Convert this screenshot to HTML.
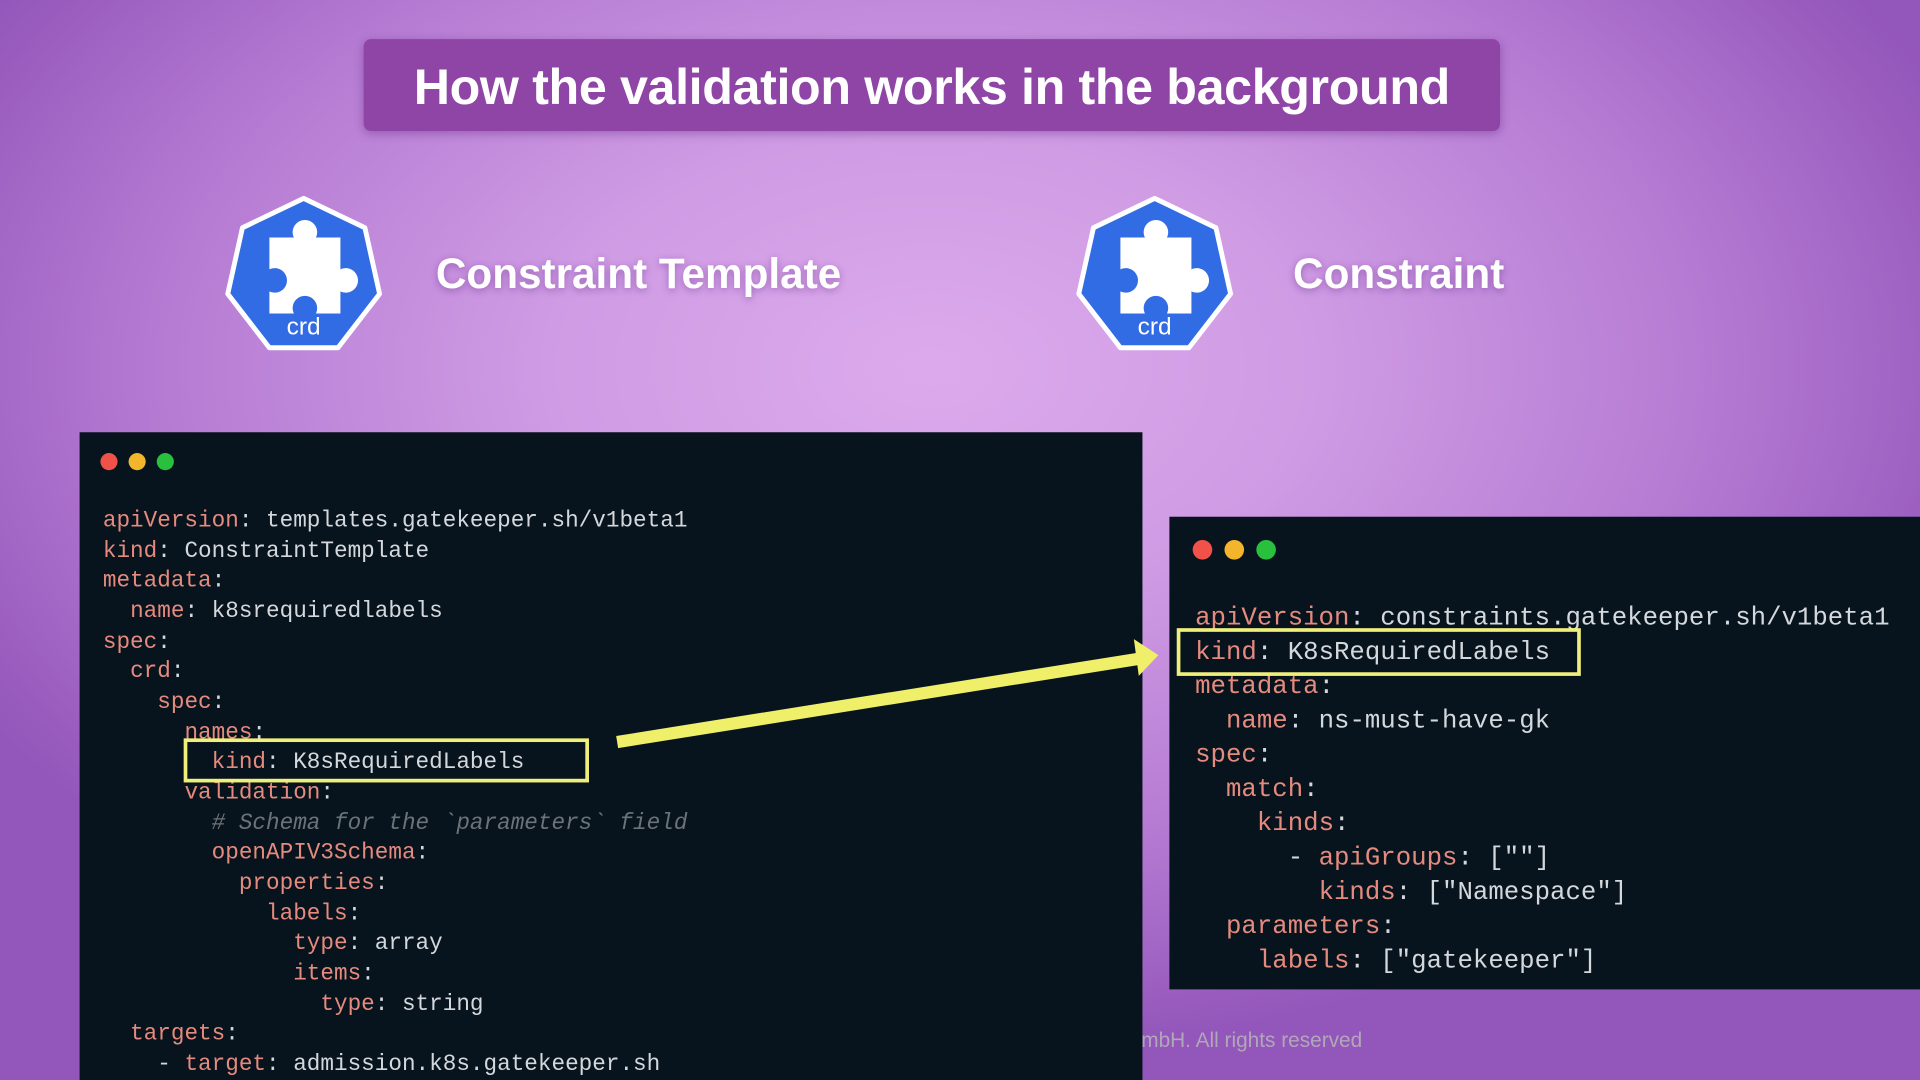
<!DOCTYPE html>
<html><head><meta charset="utf-8"><style>
html,body{margin:0;padding:0;width:1920px;height:1080px;overflow:hidden;background:#9d63c2}
#s{position:absolute;left:0;top:0;width:1568px;height:882px;transform:scale(1.22449);transform-origin:0 0;overflow:hidden;
background:radial-gradient(ellipse 900px 560px at 760px 300px,#dcaaec 0%,#cf9be4 35%,#b57bd3 70%,#9356ba 100%);}
.title{position:absolute;left:297px;top:32px;width:928px;height:75px;background:#8e45a6;border-radius:6px;box-shadow:0 2px 8px rgba(90,30,120,.4);
color:#fff;font:bold 41px "Liberation Sans",sans-serif;text-align:center;line-height:78px;letter-spacing:-0.3px}
.lbl{position:absolute;color:#fff;font:bold 34.5px "Liberation Sans",sans-serif;text-shadow:0 2px 6px rgba(80,20,120,.4)}
.panel{position:absolute;background:#07141d}
.dot{position:absolute;border-radius:50%}
pre{position:absolute;margin:0;font-family:"Liberation Mono",monospace;color:#d4d8dc}
.k{color:#e58a7e}.c{color:#6c7378;font-style:italic}
.box{position:absolute;border:3px solid #f0ef7c;box-sizing:border-box}
.foot{position:absolute;left:932px;top:840px;color:#b0a8b8;font:17px "Liberation Sans",sans-serif}
</style></head><body><div id="s">
<div class="title">How the validation works in the background</div>

<svg style="position:absolute;left:180px;top:158px" width="136" height="136" viewBox="0 0 136 136">
<polygon points="68,4 118,28 130,82 96,126 40,126 6,82 18,28" fill="#326ce5" stroke="#fff" stroke-width="4" stroke-linejoin="round"/>
<path d="M40,36 H60 a10,10 0 1 1 18,0 H98 V62 a10,10 0 1 1 0,18 V98 H78 a10,10 0 1 0 -18,0 H40 V80 a10,10 0 1 0 0,-18 Z" fill="#fff"/>
<text x="68" y="115" fill="#fff" font-family="Liberation Sans,sans-serif" font-size="20" text-anchor="middle">crd</text>
</svg>
<div class="lbl" style="left:356px;top:205px">Constraint Template</div>
<svg style="position:absolute;left:875px;top:158px" width="136" height="136" viewBox="0 0 136 136">
<polygon points="68,4 118,28 130,82 96,126 40,126 6,82 18,28" fill="#326ce5" stroke="#fff" stroke-width="4" stroke-linejoin="round"/>
<path d="M40,36 H60 a10,10 0 1 1 18,0 H98 V62 a10,10 0 1 1 0,18 V98 H78 a10,10 0 1 0 -18,0 H40 V80 a10,10 0 1 0 0,-18 Z" fill="#fff"/>
<text x="68" y="115" fill="#fff" font-family="Liberation Sans,sans-serif" font-size="20" text-anchor="middle">crd</text>
</svg>
<div class="lbl" style="left:1056px;top:205px">Constraint</div>

<div class="panel" style="left:65px;top:353px;width:868px;height:540px"></div>
<div class="dot" style="left:82px;top:370px;width:14px;height:14px;background:#f0524a"></div>
<div class="dot" style="left:105px;top:370px;width:14px;height:14px;background:#f3b52c"></div>
<div class="dot" style="left:128px;top:370px;width:14px;height:14px;background:#29c03e"></div>
<pre style="left:84px;top:414px;font-size:18.5px;line-height:24.65px"><span class="k">apiVersion</span>: templates.gatekeeper.sh/v1beta1
<span class="k">kind</span>: ConstraintTemplate
<span class="k">metadata</span>:
  <span class="k">name</span>: k8srequiredlabels
<span class="k">spec</span>:
  <span class="k">crd</span>:
    <span class="k">spec</span>:
      <span class="k">names</span>:
        <span class="k">kind</span>: K8sRequiredLabels
      <span class="k">validation</span>:
        <span class="c"># Schema for the `parameters` field</span>
        <span class="k">openAPIV3Schema</span>:
          <span class="k">properties</span>:
            <span class="k">labels</span>:
              <span class="k">type</span>: array
              <span class="k">items</span>:
                <span class="k">type</span>: string
  <span class="k">targets</span>:
    - <span class="k">target</span>: admission.k8s.gatekeeper.sh</pre>
<div class="box" style="left:150px;top:603px;width:331px;height:36px"></div>

<div class="panel" style="left:955px;top:422px;width:620px;height:386px"></div>
<div class="dot" style="left:974px;top:441px;width:16px;height:16px;background:#f0524a"></div>
<div class="dot" style="left:1000px;top:441px;width:16px;height:16px;background:#f3b52c"></div>
<div class="dot" style="left:1026px;top:441px;width:16px;height:16px;background:#29c03e"></div>
<pre style="left:976px;top:492px;font-size:21px;line-height:28px"><span class="k">apiVersion</span>: constraints.gatekeeper.sh/v1beta1
<span class="k">kind</span>: K8sRequiredLabels
<span class="k">metadata</span>:
  <span class="k">name</span>: ns-must-have-gk
<span class="k">spec</span>:
  <span class="k">match</span>:
    <span class="k">kinds</span>:
      - <span class="k">apiGroups</span>: [""]
        <span class="k">kinds</span>: ["Namespace"]
  <span class="k">parameters</span>:
    <span class="k">labels</span>: ["gatekeeper"]</pre>
<div class="box" style="left:961px;top:513px;width:330px;height:39px"></div>

<svg style="position:absolute;left:0;top:0" width="1568" height="882">
<line x1="504" y1="606" x2="930" y2="538" stroke="#f0ef6a" stroke-width="10"/>
<polygon points="946,535 926,522 930,552" fill="#f0ef6a"/>
</svg>
<div class="foot">mbH. All rights reserved</div>
</div></body></html>
